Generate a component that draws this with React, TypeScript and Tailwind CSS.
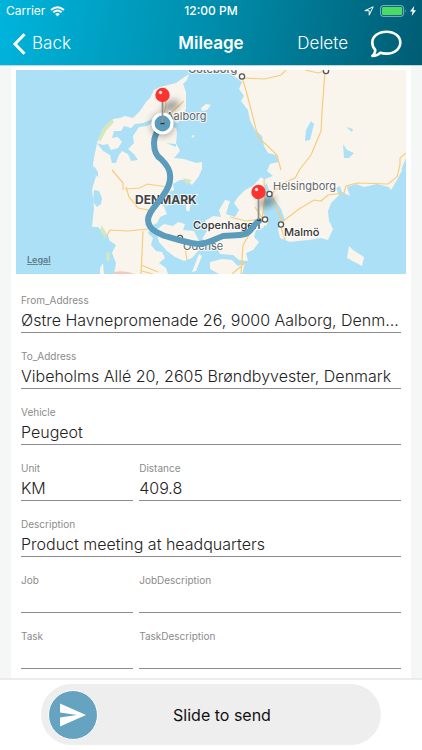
import React from "react";
import { useState } from "react";

const font = "font-['Inter','Liberation_Sans',sans-serif]";

function StatusBar() {
  return (
    <div className="grid grid-cols-3 items-center h-[22px] px-[6px] text-white text-xs">
      <div className="flex items-center gap-[5px]">
        <span>Carrier</span>
        <svg width="15" height="11" viewBox="0 0 15 11" fill="none" stroke="white" strokeWidth="1.8">
          <path d="M1 4 Q7.500 -1.600 14 4" />
          <path d="M3.300 6.300 Q7.500 2.700 11.700 6.300" />
          <path d="M7.500 10.500 L5.100 8 Q7.500 6.200 9.900 8 Z" fill="white" stroke="none" />
        </svg>
      </div>
      <span className="text-center font-medium">12:00 PM</span>
      <div className="flex items-center justify-end gap-[6px]">
        <svg width="10" height="10" viewBox="0 0 10 10" fill="none" stroke="white" strokeWidth="1" strokeLinejoin="round">
          <path d="M9.200 .8 L.8 4.700 H5.200 V9.200 Z" />
        </svg>
        <div className="flex items-center gap-[3px]">
          <svg width="27" height="12" viewBox="0 0 27 12">
            <rect x=".6" y=".6" width="23" height="10.800" rx="2.600" fill="none" stroke="white" strokeOpacity=".5" />
            <rect x="2" y="2" width="20.200" height="8" rx="1.300" fill="#4cd964" />
            <path d="M25.200 4 Q26.600 6 25.200 8 Z" fill="white" fillOpacity=".5" />
          </svg>
          <svg width="6" height="10" viewBox="0 0 6 10" fill="white">
            <path d="M4.200 0 L0 5.600 H2.500 L1.700 10 L6 4.200 H3.500 Z" />
          </svg>
        </div>
      </div>
    </div>
  );
}

function TopBar() {
  return (
    <header className="shrink-0 bg-[linear-gradient(100deg,#00b4dc_0%,#008dab_50%,#005c73_100%)] border-b border-[#b9d8e0]">
      <StatusBar />
      <div className="grid grid-cols-3 items-center h-[43px] px-5 text-white text-[17px]">
        <button type="button" className="flex items-center gap-[6px] -ml-2 font-light">
          <svg width="14" height="22" viewBox="0 0 14 22" fill="none" stroke="white" strokeWidth="3">
            <path d="M12.500 1.300 L3 11 L12.500 20.700" />
          </svg>
          <span>Back</span>
        </button>
        <h1 className="text-center font-semibold">Mileage</h1>
        <div className="flex items-center justify-end gap-[22px]">
          <button type="button" className="font-light">Delete</button>
          <button type="button" aria-label="Comments" className="shrink-0">
            <svg width="32" height="28" viewBox="0 0 32 28" fill="none" stroke="white" strokeWidth="2.600" strokeLinejoin="round">
              <path d="M16.500 1.700 C8.500 1.700 2.300 6.400 2.300 12.500 C2.300 15.700 3.700 18.400 5.300 20 C5.200 22.800 4 24.600 2.300 26 C5.600 26 8.600 24.600 10.300 22.700 C12.300 23.400 14.300 23.600 16.500 23.600 C24.500 23.600 30.300 18.800 30.300 12.500 C30.300 6.400 24.500 1.700 16.500 1.700 Z" />
            </svg>
          </button>
        </div>
      </div>
    </header>
  );
}

function Pin({ x, y }: { x: number; y: number }) {
  return (
    <g>
      <line x1={x} y1={y} x2={x} y2={y + 28} stroke="#929292" strokeWidth="1.800" />
      <circle cx={x} cy={y} r="7.200" fill="#fb3430" />
      <circle cx={x - 2} cy={y - 2.5} r="1.700" fill="#fff" fillOpacity=".85" />
    </g>
  );
}

function RouteMap() {
  return (
    <svg viewBox="16 70 390 204" className="block w-full h-auto" role="img" aria-label="Route map">
      <defs>
        <filter id="soft" x="-50%" y="-50%" width="200%" height="200%">
          <feGaussianBlur stdDeviation="3" />
        </filter>
      </defs>
      <rect x="16" y="70" width="390" height="204" fill="#ace0f6" />

      {/* land */}
      <g fill="#f9f5ed">
        <path d="M113 119 L120 118 L125 116 L133 118 L140 111 L146 102 L150 98 L154 90 L160 87 L168 85 L176 83 L183 78 L189 74 L187 80 L183 84 L186 92 L186 109 L181 118 L176 126 L177 134 L176 143 L180 151 L174 158 L184 159 L196 163 L202 162 L202 169 L199 176 L192 185 L187 180 L180 180 L173 184 L174 190 L169 192 L172 199 L169 205 L164 207 L167 214 L160 217 L157 223 L151 226 L148 233 L153 238 L151 245 L156 251 L162 252 L165 258 L159 263 L166 268 L168 274 H114 L116 263 L112 253 L116 245 L110 241 L107 234 L103 232 L98 227 L92 227 L94 208 L92 190 L96 176 L93 165 L94 158 L97 143 L102 132 Z" />
        <path d="M156 230 L164 224 L173 226 L178 222 L185 224 L183 230 L194 231 L199 241 L198 251 L192 258 L184 261 L175 257 L167 251 L159 242 Z" />
        <path d="M202 239 L207 231 L205 221 L213 216 L221 217 L219 210 L225 200 L230 201 L226 214 L235 217 L239 210 L234 203 L238 197 L245 190 L253 186 L261 177 L267 182 L262 191 L265 202 L263 213 L267 221 L263 228 L256 230 L254 237 L259 242 L253 250 L246 253 L248 261 L239 260 L233 255 L220 254 L216 245 Z" />
        <path d="M210 262 L222 259 L232 260 L238 266 L245 263 L242 274 H219 L210 269 Z" />
        <path d="M199 254 L202 256 L196 271 L192 272 Z" />
        <path d="M201 108 L206 104 L211 105 L207 110 L202 111 Z" />
        <path d="M186 202 L191 203 L189 212 L186 210 Z" />
        <path d="M191 136 L194 135 L194 138 Z M263 220 L268 222 L266 226 L263 224 Z" />
        <path d="M228 70 L234 76 L242 82 L239 89 L244 96 L241 101 L248 110 L250 120 L255 130 L262 136 L264 146 L268 153 L276 155 L279 162 L270 164 L267 171 L273 176 L265 179 L269 190 L275 200 L281 209 L285 220 L278 229 L280 238 L290 242 L298 241 L309 240 L321 238 L328 240 L333 229 L329 221 L328 211 L331 203 L339 195 L336 188 L340 186 L342 192 L350 196 L347 187 L356 184 L364 187 L377 184 L389 187 L391 190 L397 180 L403 168 L406 163 V70 Z" />
        <path d="M349 246 L353 250 L364 257 L362 266 L347 258 Z M100 268 L103 263 L104 274 H100 Z" />
      </g>

      {/* fjords and lakes */}
      <g fill="#ace0f6">
        <path d="M97 143 L103 151 L110 155 L112 163 L116 163 L119 155 L122 151 L128 154 L131 161 L138 160 L134 154 L128 149 L134 143 L133 136 L139 127 L147 126 L153 122 L162 123 L176 128 L180 124 L163 118 L153 119 L143 123 L135 124 L131 128 L124 126 L121 131 L114 131 L112 138 L118 137 L122 142 L118 148 L111 150 L108 144 L103 145 Z" />
        <path d="M94 190 L99 191 L102 198 L101 204 L97 207 L93 202 Z" />
        <path d="M94 166 L98 172 L98 177 L94 174 Z" />
        <path d="M165 207 L169 202 L160 204 Z M176 144 L166 143 L176 147 Z M152 226 L144 224 L151 229 Z" />
        <path d="M311 121 L314 124 L310 140 L305 141 L306 130 Z" />
        <path d="M346 127 L353 129 L352 132 Z M343 144 L347 150 L354 153 L349 158 L344 158 Z M406 158 L401 170 L406 167 Z" />
      </g>

      {/* parks */}
      <g fill="#d5e8bd">
        <path d="M112 119 L114 122 L106 131 L100 142 L98 139 L103 128 Z" />
        <path d="M101 225 L106 232 L105 239 L101 232 Z M107 252 L110 253 L109 261 L106 260 Z M182 178 L192 180 L187 185 L185 181 Z" />
      </g>

      {/* roads */}
      <g fill="none" stroke="#f7cc7c" strokeWidth="1.200">
        <path d="M165 87 L166 105 L162 123 M184 101 L164 119 M112 170 L123 183 V190 M125 189 L140 188 L147 184 L168 187 M126 187 L129 197 L138 208 L148 210 L149 222 M107 235 L110 230 L128 231 L148 229 M143 231 L141 274 M141 265 L158 272 M184 240 L187 260 M142 271 L153 274" />
        <path d="M242 77 L247 94 L258 137 L277 155 L281 170 M242 78 L265 79 L281 75 L288 68 M305 70 L318 73 L325 71 L322 112 L321 131 L311 155 L300 169 L295 178 L284 183 L271 194 L282 222 L299 209 L314 200 L321 201 L328 195 L344 193 L346 186 L357 183 L388 184 L397 177 L400 165 L400 158 L406 153" />
        <path d="M264 180 L265 198 L262 219 M230 217 L246 221 L261 219 L270 222 M255 207 L262 218 M252 230 L243 245 L241 274 M232 274 L246 262 M280 224 L285 240" />
      </g>
      <path d="M114 272 Q125 270 135 274 H114 Z" fill="#f3c9bd" />

      <ellipse cx="171" cy="106" rx="9" ry="5" transform="rotate(-25 171 106)" fill="#000" fillOpacity=".35" filter="url(#soft)" />
      <ellipse cx="267" cy="202" rx="9" ry="5" transform="rotate(-25 267 202)" fill="#000" fillOpacity=".35" filter="url(#soft)" />

      {/* towns */}
      <g fill="#fff" stroke="#555" strokeWidth="1.300">
        <circle cx="242" cy="76.500" r="2.600" />
        <circle cx="326" cy="71" r="2.600" />
        <circle cx="269.500" cy="194" r="2.600" />
        <circle cx="281" cy="224.500" r="2.600" />
        <circle cx="265" cy="219.500" r="2.600" />
        <circle cx="180" cy="238" r="2.600" />
      </g>
      <g
        className="font-['Inter','Liberation_Sans',sans-serif]"
        fontSize="11"
        fill="#666"
        stroke="#fff"
        strokeOpacity=".8"
        strokeWidth="2"
        paintOrder="stroke"
      >
        <text x="188" y="73" fontWeight="500">Göteborg</text>
        <text x="166" y="120">Aalborg</text>
        <text x="273" y="190">Helsingborg</text>
        <text x="183" y="250">Odense</text>
        <text x="193" y="229" fontWeight="500" fill="#333">Copenhagen</text>
        <text x="284" y="236" fontWeight="500" fill="#333">Malmö</text>
        <text x="135" y="204" fontSize="12" fontWeight="700" fill="#444">DENMARK</text>
      </g>

      {/* driven route */}
      <path
        d="M162 124 C157 132 154 136 154 143 C154 151 156 156 161 159 C166 164 170 169 170 175 C171 183 168 189 162 197 C157 205 148 212 148 220 C149 230 156 232 165 236 C175 239 187 243 198 244 C208 244 215 239 223 236 C231 235 238 236 245 234 C252 232 252 225 259 221"
        fill="none"
        stroke="#5b9bbb"
        strokeWidth="6"
        strokeLinecap="round"
        strokeLinejoin="round"
      />
      <circle cx="162.500" cy="124.500" r="12" fill="#000" fillOpacity=".3" filter="url(#soft)" />
      <circle cx="162.500" cy="123.500" r="9.500" fill="#5b9bbb" stroke="#fff" strokeWidth="3.200" />
      <path d="M160.500 123.500 H164.500 M257 220 H261" stroke="#333" strokeWidth="1.500" />
      <Pin x={162.5} y={95} />
      <Pin x={258.5} y={192} />

      <text x="27" y="263" fontSize="9" fontWeight="600" fill="#5c7c8a" textDecoration="underline" className="font-['Inter','Liberation_Sans',sans-serif]">
        Legal
      </text>
    </svg>
  );
}

type FieldProps = { name: string; value?: string; wide?: boolean };

function Field({ name, value = "", wide = false }: FieldProps) {
  const [text, setText] = useState(value);
  return (
    <div className={wide ? "col-span-2 min-w-0" : "min-w-0"}>
      <label htmlFor={name} className="block text-[10px] leading-3 text-[#8b8b8b]">
        {name}
      </label>
      <input
        id={name}
        type="text"
        value={text}
        onChange={(e) => setText(e.target.value)}
        className="block w-full h-[25px] mt-[2px] border-b border-[#8c8c8c] bg-transparent text-base font-light text-[#222222] text-ellipsis outline-none"
      />
    </div>
  );
}

function SendBar() {
  return (
    <footer className="shrink-0 flex justify-center border-t-2 border-[#ececec] bg-white px-10 pt-1 pb-[5px]">
      <button type="button" className="flex items-center w-full max-w-[340px] h-[61px] px-[7px] rounded-full bg-[#eeeeee]">
        <span className="flex items-center justify-center shrink-0 size-[50px] rounded-full border border-white bg-[#65a3c1]">
          <svg width="28" height="24" viewBox="0 0 28 24" fill="white">
            <path d="M1 .5 L27 12 L1 23.500 V14.500 L18 12 L1 9.500 Z" />
          </svg>
        </span>
        <span className="flex-1 pr-7 text-center text-base text-[#111111]">Slide to send</span>
      </button>
    </footer>
  );
}

function App() {
  return (
    <div className={`flex flex-col h-screen bg-[#f5f7f7] ${font}`}>
      <TopBar />
      <main className="flex-1 min-h-0 overflow-y-auto px-[11px]">
        <div className="min-h-full bg-white px-[5px] pt-1">
          <RouteMap />
          <form className="grid grid-cols-[3fr_7fr] gap-x-[6px] gap-y-[17px] px-[5px] pt-5 pb-2">
            <Field name="From_Address" value="Østre Havnepromenade 26, 9000 Aalborg, Denmark" wide />
            <Field name="To_Address" value="Vibeholms Allé 20, 2605 Brøndbyvester, Denmark" wide />
            <Field name="Vehicle" value="Peugeot" wide />
            <Field name="Unit" value="KM" />
            <Field name="Distance" value="409.8" />
            <Field name="Description" value="Product meeting at headquarters" wide />
            <Field name="Job" />
            <Field name="JobDescription" />
            <Field name="Task" />
            <Field name="TaskDescription" />
          </form>
        </div>
      </main>
      <SendBar />
    </div>
  );
}

export default App;
